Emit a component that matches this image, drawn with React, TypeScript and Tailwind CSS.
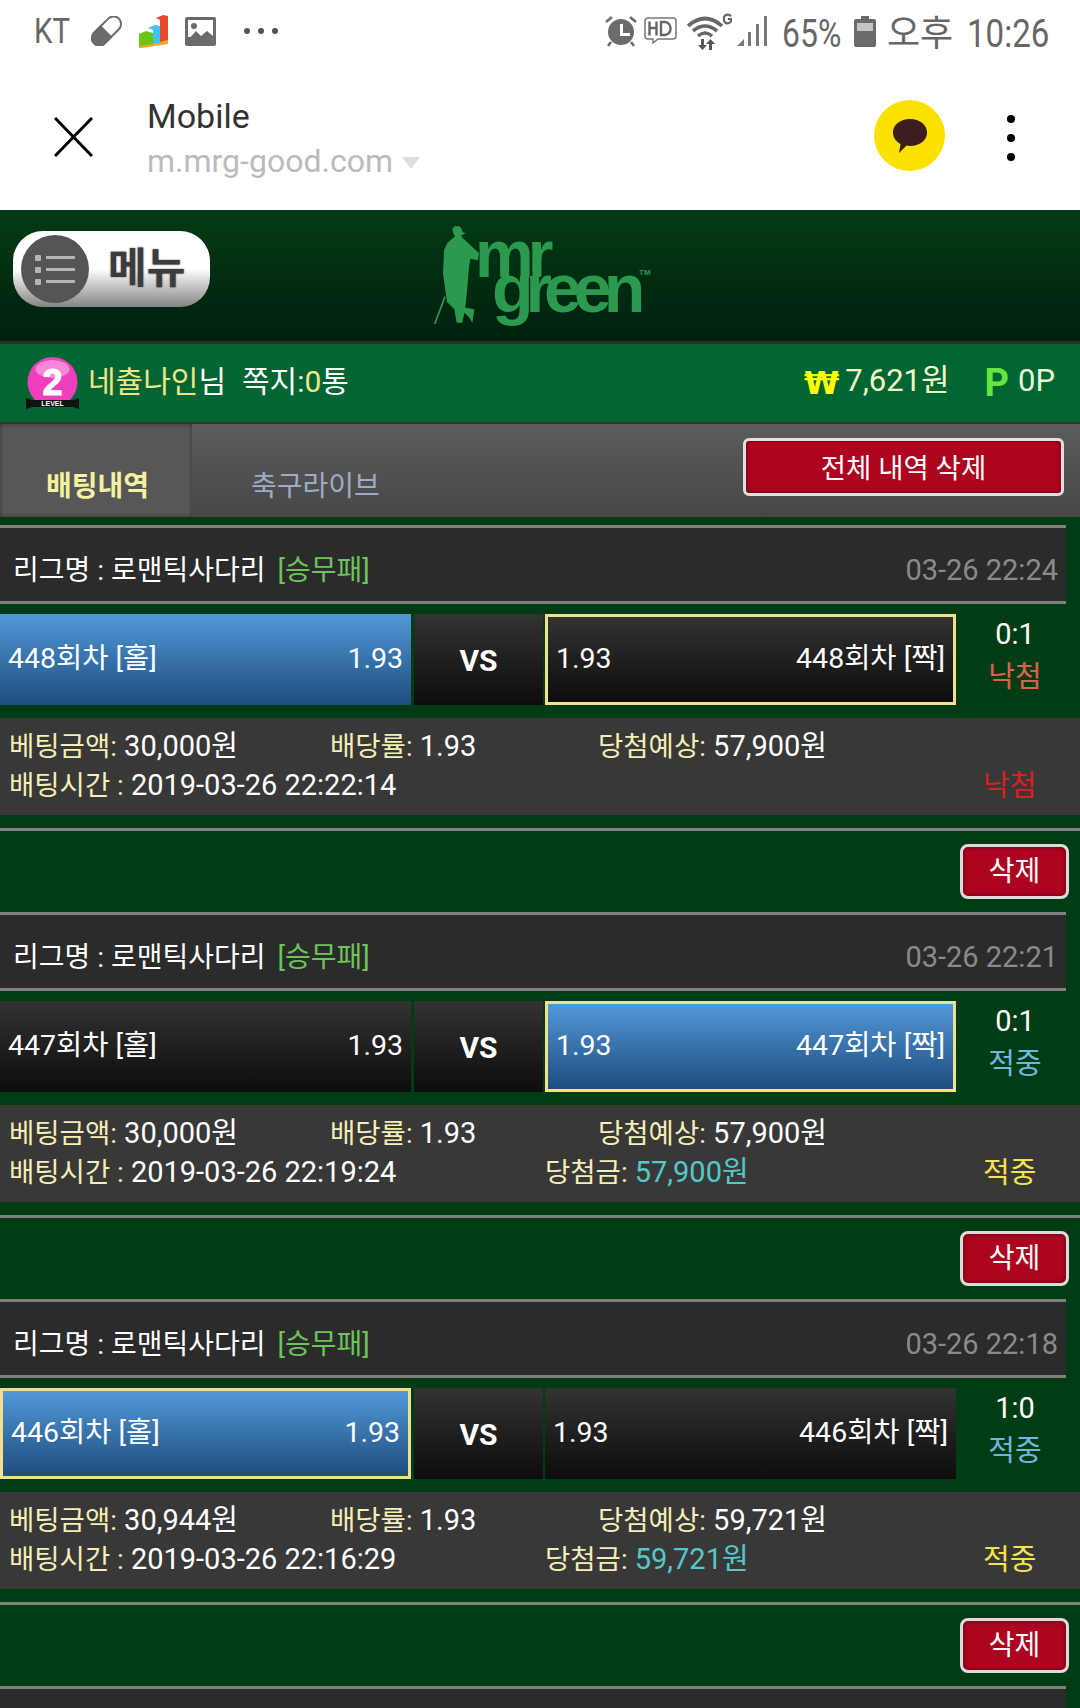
// App.tsx
import React from 'react';

type Bet = {
  league: string;
  date: string;
  round: string;
  blue: 'left' | 'right';
  border: 'left' | 'right';
  score: string;
  amount: string;
  time: string;
  expected: string;
  won?: string;
};

const bets: Bet[] = [
  { league: '리그명 : 로맨틱사다리', date: '03-26 22:24', round: '448', blue: 'left', border: 'right', score: '0:1', amount: '30,000원', time: '2019-03-26 22:22:14', expected: '57,900원' },
  { league: '리그명 : 로맨틱사다리', date: '03-26 22:21', round: '447', blue: 'right', border: 'right', score: '0:1', amount: '30,000원', time: '2019-03-26 22:19:24', expected: '57,900원', won: '57,900원' },
  { league: '리그명 : 로맨틱사다리', date: '03-26 22:18', round: '446', blue: 'left', border: 'left', score: '1:0', amount: '30,944원', time: '2019-03-26 22:16:29', expected: '59,721원', won: '59,721원' },
];

const StatusLeft = () => (
  <div className="flex items-center">
    <span className="w-[36px] ml-[34px] mt-[1px] text-[35px] leading-none text-[#666] whitespace-nowrap origin-left scale-x-[.84]">KT</span>
    {/* pill */}
    <svg className="ml-[21px]" width="31" height="30" viewBox="0 0 31 30">
      <g transform="rotate(-45 15.5 15)">
        <rect x="-2" y="7.5" width="35" height="15" rx="7.5" fill="#fff" stroke="#6b6b6b" strokeWidth="2" />
        <path d="M5.5 6.5h10v17h-10a8.5 8.5 0 0 1 0-17z" fill="#6b6b6b" />
      </g>
    </svg>
    {/* chart app */}
    <svg className="ml-[17px]" width="29" height="33" viewBox="0 0 29 33">
      <path d="M0 29l29-4v4L3 33H0z" fill="#f5a623" />
      <path d="M0 19l7-3 7 2v11l-14 2z" fill="#6cc417" />
      <path d="M9 13l7-3 5 1v17l-7 1V15z" fill="#3fc3f5" />
      <path d="M17 3l7-3 5 1v24l-8 2V5z" fill="#ea4a2c" />
    </svg>
    {/* gallery */}
    <svg className="ml-[17px]" width="31" height="29" viewBox="0 0 31 29">
      <rect width="31" height="29" rx="2" fill="#6b6b6b" />
      <rect x="3" y="3" width="25" height="17" fill="#fff" />
      <circle cx="9" cy="9" r="3" fill="#6b6b6b" />
      <path d="M3 23l8-9 5 5 6-5 6 5v7H3z" fill="#6b6b6b" />
    </svg>
    <div className="ml-[28px] flex gap-[8px]">
      <span className="w-[6px] h-[6px] rounded-full bg-[#555]" />
      <span className="w-[6px] h-[6px] rounded-full bg-[#555]" />
      <span className="w-[6px] h-[6px] rounded-full bg-[#555]" />
    </div>
  </div>
);

const StatusRight = () => (
  <div className="flex items-center pr-[31px]">
    {/* alarm */}
    <svg width="32" height="32" viewBox="0 0 32 32">
      <circle cx="16" cy="17" r="13" fill="#6b6b6b" />
      <path d="M15 9h3v9h7v3H15z" fill="#fff" />
      <path d="M1 7l6-5M31 7l-6-5M6 27l-3 4M26 27l3 4" stroke="#6b6b6b" strokeWidth="2.5" />
    </svg>
    {/* hd call */}
    <svg className="ml-[7px]" width="33" height="28" viewBox="0 0 33 28">
      <path d="M4 1h25a3 3 0 0 1 3 3v15a3 3 0 0 1-3 3H14l-5 4v-4H4a3 3 0 0 1-3-3V4a3 3 0 0 1 3-3z" fill="none" stroke="#777" strokeWidth="1.5" />
      <path d="M5.500 4.500v14M5.500 11h7M12.500 4.500v14M17 5v13h3.500a6 6 0 0 0 6-6v-1a6 6 0 0 0-6-6z" fill="none" stroke="#666" strokeWidth="2.400" />
    </svg>
    {/* wifi with G */}
    <svg className="ml-[10px]" width="45" height="38" viewBox="0 0 45 38">
      <path d="M1 14Q18-1 35 14M6 19q12-10 24 0M11 24q7-6 14 0" fill="none" stroke="#666" strokeWidth="3.600" />
      <path d="M14 27h3v6h3l-4.500 5-4.500-5h3zM22 38v-6h-3l4.500-5 4.500 5h-3v6z" fill="#555" />
      <path d="M44 4.500A4 4 0 0 0 37 5v4a4 4 0 0 0 7 .5V7h-3" fill="none" stroke="#666" strokeWidth="2.200" />
    </svg>
    {/* signal */}
    <svg className="ml-[5px]" width="31" height="31" viewBox="0 0 31 31">
      <path d="M0 30l7-7v7z" fill="#777" />
      <rect x="11" y="16" width="3" height="14" fill="#777" />
      <rect x="19" y="8" width="3" height="22" fill="#777" />
      <rect x="27" y="0" width="3" height="30" fill="#777" />
    </svg>
    <span className="ml-[14px] mt-[5px] w-[59px] text-[38px] leading-none text-[#666] whitespace-nowrap origin-left scale-x-[.84]">65%</span>
    {/* battery */}
    <svg className="ml-[13px]" width="22" height="31" viewBox="0 0 22 31">
      <path d="M7 0h8v3h5a2 2 0 0 1 2 2v24a2 2 0 0 1-2 2H2a2 2 0 0 1-2-2V5a2 2 0 0 1 2-2h5z" fill="#6b6b6b" />
      <rect x="3" y="7" width="16" height="8" fill="#c4c4c4" />
    </svg>
    <span className="ml-[11px] mt-[5px] w-[66px] text-[36px] leading-none text-[#666] whitespace-nowrap">오후</span>
    <span className="ml-[14px] mt-[5px] w-[82px] text-[38px] leading-none text-[#666] whitespace-nowrap origin-left scale-x-[.87]">10:26</span>
  </div>
);

const AppBar = () => (
  <div className="h-[150px] flex items-start bg-white">
    <svg className="ml-[54px] mt-[57px]" width="39" height="40" viewBox="0 0 39 40">
      <path d="M1 1l37 38M38 1L1 39" stroke="#000" strokeWidth="3" />
    </svg>
    <div className="ml-[54px] mt-[34px] flex flex-col">
      <span className="text-[34px] leading-[44px] text-[#333]">Mobile</span>
      <div className="flex items-center">
        <span className="text-[32px] leading-[46px] text-[#bbb]">m.mrg-good.com</span>
        <span className="ml-[9px] mt-[4px] w-0 h-0 border-x-[9px] border-x-transparent border-t-[12px] border-t-[#ddd]" />
      </div>
    </div>
    <div className="ml-auto mt-[40px] w-[71px] h-[71px] rounded-full bg-[#fae100] flex items-center justify-center">
      <svg width="36" height="36" viewBox="0 0 36 36">
        <path d="M18 1c9.500 0 17 5.500 17 13.500S27.500 28 18 28c-1 0-2.500-.2-3.500-.4L7 35l1.500-9C4 23.500 1 19.500 1 14.500 1 6.500 8.500 1 18 1z" fill="#3c1e1e" />
      </svg>
    </div>
    <div className="ml-[62px] mr-[65px] mt-[55px] flex flex-col gap-[11px]">
      <span className="w-[8px] h-[8px] rounded-full bg-black" />
      <span className="w-[8px] h-[8px] rounded-full bg-black" />
      <span className="w-[8px] h-[8px] rounded-full bg-black" />
    </div>
  </div>
);

const MenuButton = () => (
  <div className="ml-[13px] mt-[21px] w-[197px] h-[76px] rounded-[30px] bg-gradient-to-b from-white via-white to-[#858585] flex items-center">
    <div className="ml-[8px] w-[68px] h-[68px] rounded-full bg-[#555] flex items-center justify-center">
      <svg width="40" height="31" viewBox="0 0 40 31">
        <rect x="0" y="1" width="6" height="6" rx="1" fill="#b5b5b5" />
        <rect x="0" y="13" width="6" height="6" rx="1" fill="#b5b5b5" />
        <rect x="0" y="25" width="6" height="6" rx="1" fill="#b5b5b5" />
        <rect x="11" y="2" width="29" height="3" fill="#b5b5b5" />
        <rect x="11" y="14" width="29" height="3" fill="#b5b5b5" />
        <rect x="11" y="26" width="29" height="3" fill="#b5b5b5" />
      </svg>
    </div>
    <span className="ml-[19px] text-[42px] font-bold leading-none text-[#3c3c3c] whitespace-nowrap [text-shadow:0_0_2px_#777]">메뉴</span>
  </div>
);

const Logo = () => (
  <div className="relative w-[222px] h-[100px] ml-[224px] mt-[16px] text-[#2b9a4f] font-['Liberation_Sans',sans-serif] font-bold">
    <svg className="absolute left-0 top-0" width="66" height="100" viewBox="45 33 198 300">
      <path d="M100 42l6-8h16l6 8 3 10 9 3-14 7 8 10 22 20 24 22-3 22-23-5-4 25-5 60-6 62 27 5-6 40-10-16-14-14-6 30H113l-7-40-22-22-12-85 3-70 10-22 23-20-6-10z" fill="currentColor" />
      <path d="M78 245L47 327" stroke="currentColor" strokeWidth="5" />
    </svg>
    <span className="absolute left-[41px] top-[-5px] text-[66px] leading-none tracking-[-6px]">mr</span>
    <span className="absolute left-[58px] top-[28px] text-[68px] leading-none tracking-[-8px]">green</span>
    <span className="absolute left-[205px] top-[43px] text-[8px] leading-none">TM</span>
  </div>
);

const UserBar = () => (
  <div className="h-[78px] bg-[#026534] flex items-center text-[30px] text-white">
    <svg className="ml-[26px]" width="53" height="53" viewBox="0 0 53 53">
      <circle cx="26.500" cy="25" r="25" fill="#ef3fbd" />
      <ellipse cx="26.500" cy="12" rx="17" ry="9" fill="#f78ad8" />
      <text x="26.500" y="38" textAnchor="middle" fontSize="36" fontWeight="900" fill="#fff" stroke="#fff" strokeWidth="1" fontFamily="Liberation Sans">2</text>
      <path d="M0 41l6 2h41l6-2v11l-6-2H6l-6 2z" fill="#111" />
      <text x="26.500" y="49" textAnchor="middle" fontSize="7" fontWeight="700" fill="#fff" fontFamily="Liberation Sans">LEVEL</text>
    </svg>
    <span className="ml-[9px] mb-[3px] text-[#efe688] whitespace-nowrap">네츌나인</span>
    <span className="mb-[3px]">님</span>
    <span className="ml-[16px] mb-[3px] whitespace-nowrap">쪽지:<span className="text-[#efe688]">0</span>통</span>
    <span className="ml-auto text-[#ffff00] text-[32px] font-bold font-['DejaVu_Sans',sans-serif] leading-none">₩</span>
    <span className="ml-[6px] mb-[3px] text-[31px] text-[#f2f9c4] whitespace-nowrap">7,621원</span>
    <span className="ml-[35px] text-[#63e63f] text-[38px] font-bold leading-none">P</span>
    <span className="ml-[9px] mr-[25px] mb-[3px] text-[31px] text-[#e6fbd8] whitespace-nowrap">0P</span>
  </div>
);

const Tabs = () => (
  <div className="h-[93px] bg-gradient-to-b from-[#5c5c5c] to-[#474747] flex">
    <div className="w-[192px] h-full bg-[#575757] shadow-[inset_0_0_4px_#333] flex items-center justify-center pl-[3px] pt-[32px]">
      <span className="text-[28px] font-bold text-[#f2f2a0] whitespace-nowrap">배팅내역</span>
    </div>
    <div className="ml-[59px] flex items-center pt-[32px]">
      <span className="text-[28px] text-[#9cacc8] whitespace-nowrap">축구라이브</span>
    </div>
    <button className="ml-auto mr-[16px] mt-[14px] w-[321px] h-[58px] rounded-[6px] border-[3px] border-[#e8dcdc] bg-[#ad0420] shadow-[inset_0_0_4px_#5c0010] pt-[3px] text-[27.500px] text-white whitespace-nowrap">
      전체 내역 삭제
    </button>
  </div>
);

const Cell = ({ left, right, blue, border, width }: { left: string; right: string; blue: boolean; border: boolean; width: string }) => (
  <div
    className={`${width} h-full flex items-center justify-between px-[8px] text-[28.500px] text-white whitespace-nowrap ${
      blue ? 'bg-gradient-to-b from-[#5299d9] to-[#1e4d7e]' : 'bg-gradient-to-b from-[#333] to-[#0d0d0d]'
    } ${border ? 'border-[3px] border-[#f4e08c]' : ''}`}
  >
    <span>{left}</span>
    <span>{right}</span>
  </div>
);

const Label = ({ children }: { children: React.ReactNode }) => <span className="text-[27.500px] text-[#f5eeb5]">{children}</span>;

const BetCard = ({ bet }: { bet: Bet }) => {
  const hit = !!bet.won;
  return (
    <section className="h-[387px] flex flex-col">
      <div className="w-[1066px] h-[79px] border-y-[3px] border-[#808080] bg-[#2b2b2b] flex items-center justify-between pl-[13px] pr-[8px] pt-[12px] text-[28px]">
        <span className="text-white whitespace-nowrap">
          {bet.league} <span className="ml-[5px] text-[#6cc45a]">[승무패]</span>
        </span>
        <span className="text-[29px] text-[#8a8a8a] whitespace-nowrap">{bet.date}</span>
      </div>

      <div className="mt-[10px] h-[91px] flex">
        <Cell width="w-[411px]" left={`${bet.round}회차 [홀]`} right="1.93" blue={bet.blue === 'left'} border={bet.border === 'left'} />
        <div className="ml-[3px] w-[129px] h-full bg-gradient-to-b from-[#333] to-[#0d0d0d] flex items-center justify-center pt-[2px]">
          <span className="text-[30px] font-bold text-white">VS</span>
        </div>
        <div className="w-[2px]" />
        <Cell width="w-[411px]" left="1.93" right={`${bet.round}회차 [짝]`} blue={bet.blue === 'right'} border={bet.border === 'right'} />
        <div className="flex-1 flex flex-col items-center pr-[6px] text-[29px] leading-[43px] -mt-[1px]">
          <span className="text-white">{bet.score}</span>
          <span className={hit ? 'text-[#6fb7dc]' : 'text-[#e0604f]'}>{hit ? '적중' : '낙첨'}</span>
        </div>
      </div>

      <div className="mt-[13px] h-[97px] bg-[#383838] pt-[9px] text-[29px] leading-[39px] text-white">
        <div className="flex pl-[9px] whitespace-nowrap">
          <span className="w-[321px]"><Label>베팅금액:</Label> {bet.amount}</span>
          <span className="w-[268px]"><Label>배당률:</Label> 1.93</span>
          <span><Label>당첨예상:</Label> {bet.expected}</span>
        </div>
        <div className="flex pl-[9px] whitespace-nowrap">
          <span className="w-[536px]"><Label>배팅시간 :</Label> {bet.time}</span>
          <span className="w-[438px]">
            {bet.won && <><Label>당첨금:</Label> <span className="text-[#55c8c8]">{bet.won}</span></>}
          </span>
          <span className={`mt-[1px] ${hit ? 'text-[#f4e24e]' : 'text-[#d9201f]'}`}>{hit ? '적중' : '낙첨'}</span>
        </div>
      </div>

      <div className="mt-[13px] h-[3px] bg-[#808080]" />
      <div className="flex-1 flex justify-end items-start pt-[13px] pr-[11px]">
        <button className="w-[109px] h-[55px] rounded-[8px] border-[3px] border-[#dcdcdc] bg-[#ad0420] shadow-[inset_0_0_4px_#5c0010] pt-[1px] text-[28px] text-white">
          삭제
        </button>
      </div>
    </section>
  );
};

const App: React.FC = () => {
  return (
    <div className="w-[1080px] h-[1708px] overflow-hidden bg-[#023c14] font-['Roboto','Noto_Sans_CJK_KR',sans-serif]">
      <div className="h-[60px] bg-white flex items-center justify-between pt-[2px]">
        <StatusLeft />
        <StatusRight />
      </div>
      <AppBar />

      <div className="h-[131px] bg-gradient-to-b from-[#023c14] to-[#01200f] flex border-b-0">
        <MenuButton />
        <Logo />
      </div>
      <div className="h-[3px] bg-[#2d2d2d]" />
      <UserBar />
      <div className="h-[2px] bg-[#333]" />
      <Tabs />
      <div className="h-[8px]" />

      {bets.map(bet => (
        <BetCard key={bet.round} bet={bet} />
      ))}
      <div className="w-[1066px] h-[79px] border-t-[3px] border-[#808080] bg-[#2b2b2b]" />
    </div>
  );
};

export default App;
